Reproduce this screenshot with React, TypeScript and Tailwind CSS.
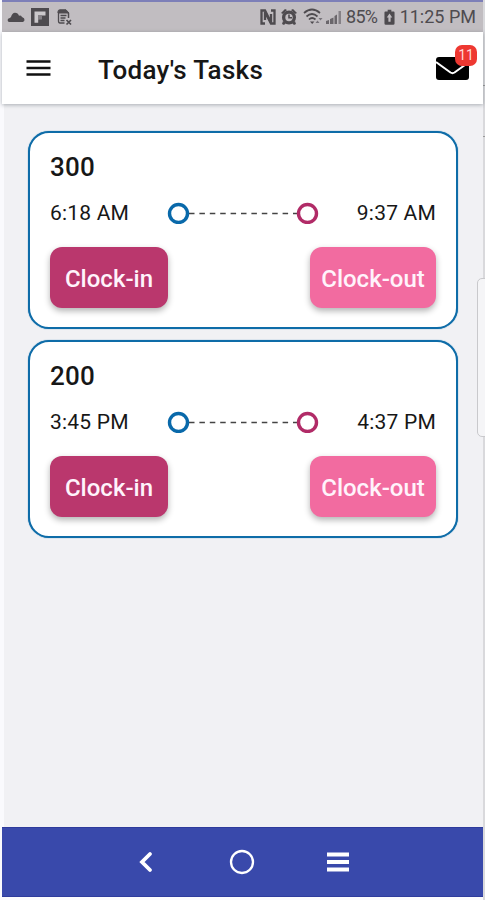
type Task = {
  id: string;
  start: string;
  end: string;
};

const tasks: Task[] = [
  { id: "300", start: "6:18 AM", end: "9:37 AM" },
  { id: "200", start: "3:45 PM", end: "4:37 PM" },
];

function StatusBar() {
  return (
    <div className="flex h-[30px] items-center bg-[#c1bdc1] pl-[5px] pr-[7px] text-[#4e4b4f]">
      <svg width="18" height="20" viewBox="0 0 18 20" fill="currentColor">
        <path d="M2 15a2 2 0 0 1-.5-3.500Q3 11 4 10q1-4 4-4.200q3 0 4 3q1.800-.8 3 1.200q2.800 1 2.500 3q0 1-1.500 2z" />
      </svg>
      <svg className="ml-[6px]" width="18" height="18" viewBox="0 0 18 18">
        <path d="M0 0h18v18H0z" fill="#4e4b4f" />
        <path d="M3.500 3.500h11v4h-3.700v3.700H7.200v3.500H3.500z" fill="#cbc8cb" />
        <path d="M7 7h4v4H7z" fill="#858186" />
      </svg>
      <svg className="ml-[8px]" width="15" height="17" viewBox="0 0 15 17" fill="none" stroke="currentColor">
        <path d="M7.500 14H3Q1.500 14 1.500 12V3" strokeWidth="1.300" />
        <path d="M1 4V2.500Q1 .8 3 .8h6L12 4z" fill="currentColor" strokeWidth="1" />
        <path d="M11.500 4v5" strokeWidth="1.500" />
        <path d="M3.500 6.500h6M3.500 9h5M3.500 11.500h4" strokeWidth="1.300" />
        <path d="m9.500 11 4.500 4.500m0-4.500-4.500 4.500" strokeWidth="1.700" />
      </svg>
      <svg className="ml-auto" width="16" height="16" viewBox="0 0 16 16" fill="none" stroke="currentColor" strokeWidth="2.300">
        <path d="M5 14.500H1.500v-13H5l6 12V5" />
        <path d="M11 1.500h3.500v13H11L5 3v8" />
      </svg>
      <svg className="ml-[5px]" width="16" height="16" viewBox="0 0 16 16" fill="currentColor">
        <path d="M0 4 4 0l2 1-4 4zM16 4l-4-4-2 1 4 4zM2 12l3 2-2 2-2-1zM14 12l-3 2 2 2 2-1z" />
        <circle cx="8" cy="8.500" r="7" />
        <circle cx="8" cy="8.500" r="3.700" fill="#c1bdc1" />
        <path d="M8 5.500v3.300h3" fill="none" stroke="currentColor" strokeWidth="1.600" />
      </svg>
      <svg className="ml-[6px]" width="21" height="18" viewBox="0 0 21 18" fill="none" stroke="currentColor" strokeWidth="1.700">
        <path d="M1 5q8-7 16 0M3.500 8.500q5.500-5 11 0M6 11.500q3-3 6.500 0" />
        <path d="m7 13.500 2.200 2.500 2.200-2.500z" fill="currentColor" stroke="none" />
        <path d="m12.500 15 2-2.500 2 2.500zM15.500 10h4l-2 2.500z" fill="#77737a" stroke="none" />
      </svg>
      <svg className="ml-[2px]" width="17" height="16" viewBox="0 0 17 16" fill="currentColor">
        <path d="M0 15v-3l3-1v4zM4 15v-5l3.500-1.500V15zM8.500 15V7L11 5.500V15z" fill="#6a666b" />
        <path d="M12.500 2H15v13h-2.500z" fill="#858186" />
      </svg>
      <span className="ml-[3px] w-[33px] whitespace-nowrap text-[18px] leading-[32px] tracking-[-0.700px]">85%</span>
      <svg className="ml-[5px]" width="11" height="17" viewBox="0 0 12 17">
        <path d="M4 0h4v2h2.500q1 0 1 1v12q0 1.500-1.500 1.500H2Q.5 16.500.5 15V3q0-1 1-1H4z" fill="#4e4b4f" />
        <path d="m6 4 3 4.500H7.200V13H4.800V8.500H3z" fill="#c1bdc1" />
      </svg>
      <span className="ml-[6px] flex w-[75px] justify-end whitespace-nowrap text-[18px] leading-[32px]">11:25 PM</span>
    </div>
  );
}

function Header() {
  return (
    <header className="relative flex h-[72px] items-center bg-white pl-[24px] pr-[14px] shadow-[0_1px_4px_rgba(60,70,80,0.4)]">
      <svg width="25" height="18" viewBox="0 0 25 18" stroke="#111" strokeWidth="2.400">
        <path d="M.5 2.500h24M.5 9h24M.5 15.500h24" />
      </svg>
      <h1 className="ml-[47px] whitespace-nowrap pt-[3px] text-[26px] font-medium leading-[30px] tracking-[0.300px]">
        Today's Tasks
      </h1>
      <div className="relative ml-auto">
        <svg width="33" height="24" viewBox="0 0 33 24">
          <rect width="33" height="23" y="1" rx="3" fill="#000" />
          <path d="m0 6 14.500 10.500q2 1.300 4 0L33 6" fill="none" stroke="#fff" strokeWidth="2" />
        </svg>
        <span className="absolute -right-[8px] -top-[11px] flex h-[21px] w-[22px] items-center justify-center rounded-[7px] bg-[#ee3831] text-[14px] text-[#ffd9d6]">
          11
        </span>
      </div>
    </header>
  );
}

function Timeline() {
  return (
    <svg width="152" height="22" viewBox="0 0 152 22" fill="none">
      <path d="M22 11.500h108" stroke="#444" strokeWidth="1.500" strokeDasharray="5.500 4.900" />
      <circle cx="11.500" cy="11.500" r="9" stroke="#0969aa" strokeWidth="3.400" />
      <circle cx="140.500" cy="11.500" r="9" stroke="#b12b67" strokeWidth="3.400" />
    </svg>
  );
}

function TaskCard({ task }: { task: Task }) {
  return (
    <div className="h-[198px] rounded-[21px] border-2 border-[#0e6ca8] bg-white pl-[20px] pr-[20px] pt-[17px] shadow-[0_0_1px_#1674ae]">
      <h2 className="text-[26px] font-medium leading-[34px] tracking-[0.200px]">{task.id}</h2>
      <div className="mt-[18px] flex h-[22px] items-center text-[21px] leading-[22px] tracking-[0.200px]">
        <span className="w-[117px] whitespace-nowrap">{task.start}</span>
        <Timeline />
        <span className="ml-auto whitespace-nowrap">{task.end}</span>
      </div>
      <div className="mt-[23px] flex justify-between text-[24px] font-medium text-[#fff3fb]">
        <button className="h-[61px] w-[118px] rounded-[12px] bg-[#ba376d] pt-[2px] shadow-[0_3px_6px_rgba(0,0,0,0.3)]">
          Clock-in
        </button>
        <button className="h-[61px] w-[126px] whitespace-nowrap rounded-[12px] bg-[#f26ba0] pt-[2px] shadow-[0_3px_6px_rgba(0,0,0,0.3)]">
          Clock-out
        </button>
      </div>
    </div>
  );
}

function NavBar() {
  return (
    <nav className="flex h-[70px] items-center border-y border-[#2e3b9c] bg-[#3949ab] pl-[136px]">
      <svg width="16" height="22" viewBox="0 0 16 22" fill="none" stroke="#fff" strokeWidth="3.800" strokeLinecap="round">
        <path d="M12 3 4 11l8 8" />
      </svg>
      <svg className="ml-[75px]" width="26" height="26" viewBox="0 0 26 26" fill="none" stroke="#fff" strokeWidth="2.300">
        <circle cx="13" cy="13" r="11" />
      </svg>
      <svg className="ml-[72px]" width="22" height="20" viewBox="0 0 22 20" stroke="#fff" strokeWidth="3.800">
        <path d="M0 2.500h22M0 10h22M0 17.500h22" />
      </svg>
    </nav>
  );
}

export default function App() {
  return (
    <div className="relative flex h-[900px] w-[485px] overflow-hidden bg-[#fafafd] pl-[2px] font-[Roboto,sans-serif] text-[#171717]">
      <div className="flex w-[481px] flex-col">
        <div className="h-[2px] bg-[#7d7fb8]" />
        <StatusBar />
        <Header />
        <main className="ml-[2px] flex flex-1 flex-col gap-[11px] bg-[#f1f1f4] pl-[24px] pr-[25px] pt-[27px]">
          {tasks.map((task) => (
            <TaskCard key={task.id} task={task} />
          ))}
        </main>
        <NavBar />
        <div className="h-[3px]" />
      </div>
      <div className="flex w-[2px] flex-col bg-[#d9d9dc]">
        <div className="mt-[85px] h-px bg-[#999]" />
        <div className="mt-[50px] h-px bg-[#999]" />
      </div>
      <div className="absolute -right-[5px] top-[278px] h-[159px] w-[13px] rounded-[5px] border border-[#c9c9cc] bg-[#f5f5f7]" />
    </div>
  );
}
